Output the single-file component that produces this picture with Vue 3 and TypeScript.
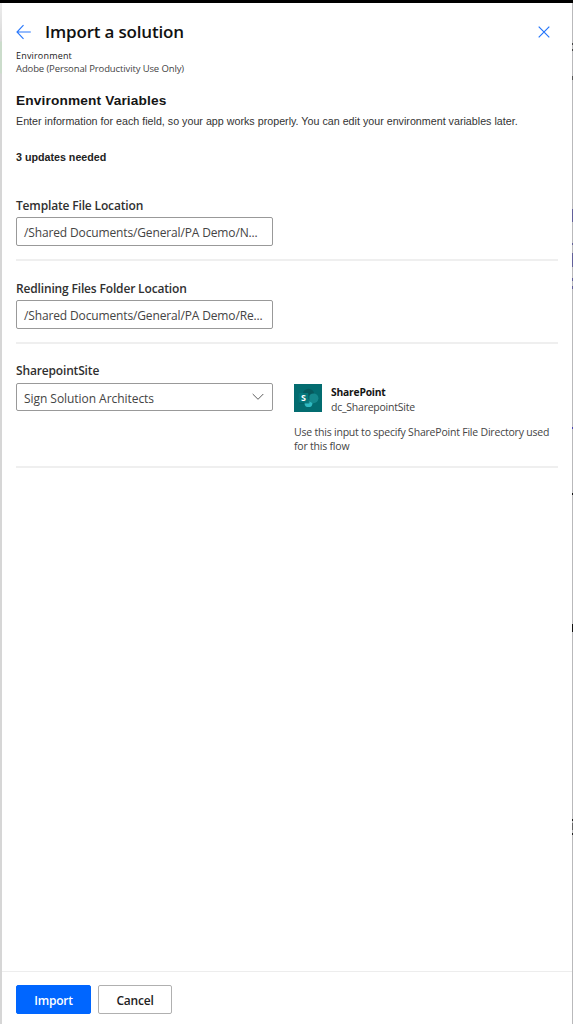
<script setup lang="ts">
interface PathField {
  label: string
  value: string
}

const pathFields: PathField[] = [
  { label: 'Template File Location', value: '/Shared Documents/General/PA Demo/N...' },
  { label: 'Redlining Files Folder Location', value: '/Shared Documents/General/PA Demo/Re...' },
]
</script>

<template>
  <div class="screen">
    <div class="top-edge"></div>
    <div class="left-edge"></div>
    <div class="right-edge"></div>
    <main class="panel">
      <header class="header">
        <svg class="back" width="16" height="16" viewBox="0 0 16 16" fill="none" stroke="#2b79fb" stroke-width="1.15">
          <path d="M7.500 1.200 1 8l6.500 6.800M1 8H14.800" />
        </svg>
        <h1>Import a solution</h1>
        <svg class="close" width="12" height="12" viewBox="0 0 12 12" fill="none" stroke="#2375fa" stroke-width="1.2">
          <path d="M.7.7 11.300 11.300M11.300.7.7 11.300" />
        </svg>
      </header>
      <div class="env-label">Environment</div>
      <div class="env-name">Adobe (Personal Productivity Use Only)</div>
      <h2>Environment Variables</h2>
      <p class="intro">Enter information for each field, so your app works properly. You can edit your environment variables later.</p>
      <p class="updates">3 updates needed</p>

      <section v-for="field in pathFields" :key="field.label" class="field">
        <div class="label">{{ field.label }}</div>
        <div class="box">{{ field.value }}</div>
      </section>

      <section class="field site">
        <div class="site-left">
          <div class="label">SharepointSite</div>
          <div class="box select">
            <span>Sign Solution Architects</span>
            <svg width="12" height="8" viewBox="0 0 12 8" fill="none" stroke="#5c5c5c" stroke-width="1">
              <path d="M.7 1 6 6.300 11.300 1" />
            </svg>
          </div>
        </div>
        <div class="site-right">
          <div class="connector">
            <svg width="28" height="28" viewBox="0 0 28 28">
              <rect width="28" height="28" fill="#036c70" />
              <circle cx="14.500" cy="10.300" r="5.600" fill="#07595d" />
              <circle cx="14.500" cy="19.200" r="3.900" fill="#30bac2" />
              <circle cx="19.500" cy="14.300" r="4.900" fill="#15898d" />
              <rect x="5" y="9" width="10.500" height="10.500" rx="1" fill="#045155" opacity=".6" />
              <rect x="4.700" y="9" width="9.700" height="9.700" rx=".8" fill="#05777b" />
              <text x="9.600" y="17" text-anchor="middle" fill="#fff" font-family="Open Sans, sans-serif" font-weight="700" font-size="9">S</text>
            </svg>
            <div class="connector-text">
              <div class="connector-name">SharePoint</div>
              <div class="connector-id">dc_SharepointSite</div>
            </div>
          </div>
          <p class="help">Use this input to specify SharePoint File Directory used<br />for this flow</p>
        </div>
      </section>

      <footer class="footer">
        <button class="primary">Import</button>
        <button class="secondary">Cancel</button>
      </footer>
    </main>
  </div>
</template>

<style>
body { margin: 0; background: #fff; }
</style>

<style scoped>
.screen {
  position: relative;
  width: 573px;
  height: 1024px;
  overflow: hidden;
  background: #fff;
  font-family: "Open Sans", "Noto Sans", sans-serif;
  color: #333;
  white-space: nowrap;
}
.top-edge { position: absolute; inset: 0 0 auto; height: 3px; background: #000; z-index: 2; }
.left-edge {
  position: absolute;
  left: 0; top: 3px; bottom: 0; width: 2px;
  background: linear-gradient(#ededed 0, #d8d8d8 38px, #cbdccb 39px 70px, #d6d6d6 71px);
}
.right-edge {
  position: absolute;
  right: 0; top: 3px; bottom: 0; width: 1px;
  background:
    linear-gradient(#444, #444) 0 40px / 1px 2px no-repeat,
    linear-gradient(#444, #444) 0 46px / 1px 2px no-repeat,
    linear-gradient(#555, #555) 0 73px / 1px 4px no-repeat,
    linear-gradient(#62609a, #62609a) 0 206px / 1px 13px no-repeat,
    linear-gradient(#62609a, #62609a) 0 240px / 1px 2px no-repeat,
    linear-gradient(#62609a, #62609a) 0 250px / 1px 14px no-repeat,
    linear-gradient(#62609a, #62609a) 0 275px / 1px 3px no-repeat,
    linear-gradient(#62609a, #62609a) 0 283px / 1px 3px no-repeat,
    linear-gradient(#4a43b0, #4a43b0) 0 424px / 1px 2px no-repeat,
    linear-gradient(#111, #111) 0 490px / 1px 2px no-repeat,
    linear-gradient(#111, #111) 0 621px / 1px 8px no-repeat,
    linear-gradient(#222, #222) 0 816px / 1px 2px no-repeat,
    linear-gradient(#666, #666) 0 820px / 1px 7px no-repeat,
    linear-gradient(#222, #222) 0 830px / 1px 2px no-repeat,
    #b9b9bb;
}
.panel {
  display: flex;
  flex-direction: column;
  height: 1024px;
  margin: 0 1px 0 2px;
  padding: 18px 14px 0;
  box-sizing: border-box;
}
h1, h2, p { margin: 0; }
.header { display: flex; align-items: center; height: 28px; }
.back { margin-right: 13px; flex: none; }
.close { margin: 0 8.500px 0 auto; }
h1 { font-size: 17px; font-weight: 600; line-height: 28px; letter-spacing: -.18px; color: #111; }
.env-label { margin-top: 4px; font-size: 9px; line-height: 12px; font-weight: 500; letter-spacing: .18px; color: #222; }
.env-name { font-size: 9.500px; line-height: 14px; letter-spacing: -.12px; color: #444; }
h2 { margin-top: 15px; font: 700 13.700px/20px "Liberation Sans", Arial, sans-serif; letter-spacing: .14px; color: #151515; }
.intro { margin-top: 2px; font: 10.700px/16px "Liberation Sans", Arial, sans-serif; letter-spacing: .01px; color: #333; }
.updates { margin-top: 20px; font: 700 10.700px/16px "Liberation Sans", Arial, sans-serif; color: #222; }
.field { height: 83px; flex: none; box-sizing: border-box; border-bottom: 2px solid #efefef; padding-top: 19px; }
.updates + .field { margin-top: 13px; }
.label { height: 19px; font-size: 12px; line-height: 18px; font-weight: 600; letter-spacing: -.16px; color: #303030; }
.box {
  display: flex;
  align-items: center;
  justify-content: space-between;
  width: 257px;
  height: 29px;
  box-sizing: border-box;
  border: 1px solid #999;
  border-radius: 2px;
  margin-top: 1px;
  padding: 2px 8px 0 7px;
  font-size: 12px;
  letter-spacing: -.14px;
  color: #444;
}
.select { height: 28px; letter-spacing: -.05px; }
.select svg { margin-top: -2px; }
.site { display: flex; height: 124px; }
.site .label { line-height: 16px; }
.site-left { width: 278px; flex: none; }
.site-right { padding-top: 21px; }
.connector { display: flex; gap: 9px; }
.connector-text { height: 32px; padding-top: 1px; box-sizing: border-box; }
.connector-name { font-size: 10.300px; font-weight: 700; line-height: 15px; letter-spacing: -.2px; color: #151515; }
.connector-id { font-size: 10.500px; line-height: 15px; letter-spacing: -.24px; color: #444; }
.help { margin-top: 9px; font-size: 10.500px; line-height: 14px; letter-spacing: -.21px; color: #444; }
.footer {
  display: flex;
  align-items: flex-start;
  gap: 7px;
  height: 53px;
  flex: none;
  box-sizing: border-box;
  margin: auto -14px 0;
  padding: 13px 14px 0;
  border-top: 1px solid #ededed;
}
button {
  height: 29px;
  box-sizing: border-box;
  padding: 2px 0 0;
  border-radius: 2px;
  font: 600 12px/25px "Open Sans", "Noto Sans", sans-serif;
  letter-spacing: -.2px;
}
.primary { width: 75px; border: 1px solid #0066ff; background: #0066ff; color: #fff; }
.secondary { width: 74px; border: 1px solid #b0b0b0; background: #fff; color: #222; }
</style>
